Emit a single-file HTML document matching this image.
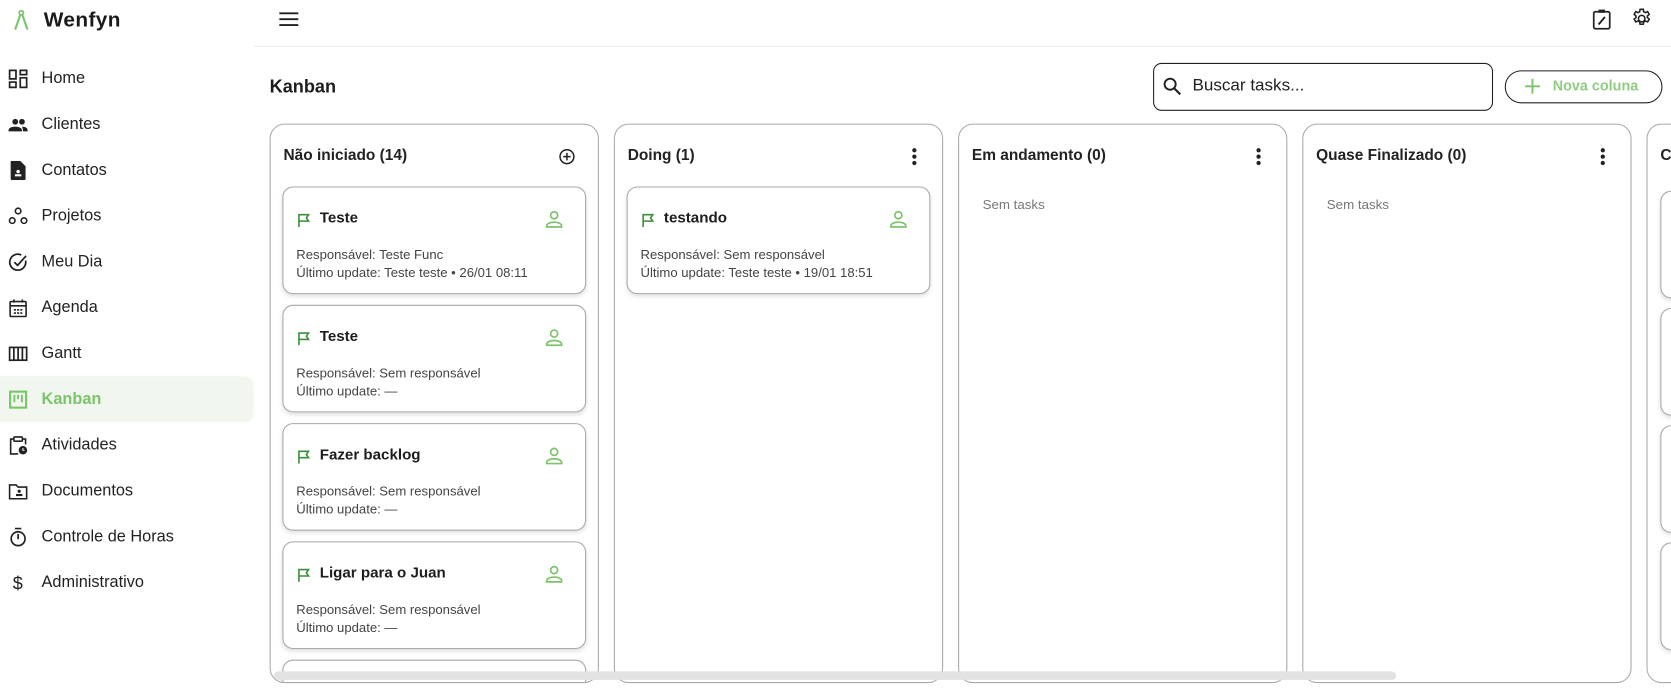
<!DOCTYPE html>
<html><head><meta charset="utf-8">
<style>
*{box-sizing:border-box;margin:0;padding:0}
html,body{width:1671px;height:693px;overflow:hidden;background:#fff}
#w{position:absolute;left:0;top:0;width:1568px;height:650px;transform:scale(1.06569);transform-origin:0 0;font-family:"Liberation Sans",sans-serif;color:#1d1d1d}
.abs{position:absolute}
.nav{position:absolute;left:0;width:238px;height:43px;display:flex;align-items:center;font-size:15.3px;color:#222}
.nav svg{position:absolute;left:8px;width:18px;height:18px}
.nav span{position:absolute;left:39px}
.nav.active{background:#f1f7ee;border-radius:0 8px 8px 0;color:#7cc46c;font-weight:bold}
.col{position:absolute;top:116px;height:525px;width:309px;border:1px solid #a9a9a9;border-radius:14px;background:#fff;overflow:hidden}
.col h3{position:absolute;left:12px;top:21px;font-size:14.5px;font-weight:bold;color:#222}
.dots{position:absolute;right:24px;top:22px;width:4px}
.dots i{display:block;width:4px;height:4px;background:#222;border-radius:50%;margin-bottom:2px}
.card{position:absolute;left:11px;width:285px;height:101px;border:1px solid #a9a9a9;border-radius:10px;background:#fff;box-shadow:0 2px 4px rgba(0,0,0,.12)}
.card .t{position:absolute;left:34px;top:21px;font-size:14.2px;font-weight:bold;color:#1d1d1d}
.card .flag{position:absolute;left:13px;top:24px}
.card .user{position:absolute;right:20px;top:21px}
.card .m{position:absolute;left:12px;top:55px;font-size:12.3px;color:#444;line-height:16.5px}
.empty{position:absolute;left:22px;top:68px;font-size:12.5px;color:#777}
</style></head><body><div id="w">

<svg class="abs" style="left:13px;top:9px" width="14" height="20" viewBox="0 0 14 20"><circle cx="7" cy="3" r="2" fill="none" stroke="#7cc46c" stroke-width="1.6"/><path d="M6 5 L1.5 18 M8 5 L12.5 18" stroke="#7cc46c" stroke-width="2" stroke-linecap="round"/></svg>
<div class="abs" style="left:41px;top:8px;font-size:19.5px;font-weight:bold;color:#1a1a1a;letter-spacing:.4px">Wenfyn</div>

<div class="abs" style="left:238px;top:43px;width:1433px;height:1px;background:#ececec"></div>
<svg class="abs" style="left:262px;top:11px" width="18" height="14" viewBox="0 0 18 14"><path d="M0 1.5H18M0 7H18M0 12.5H18" stroke="#222" stroke-width="1.8"/></svg>
<svg class="abs" style="left:1494px;top:8px" width="18" height="20" viewBox="0 0 18 20"><rect x="1.5" y="3" width="15" height="16" rx="1.5" fill="none" stroke="#222" stroke-width="1.6"/><rect x="6" y="1" width="6" height="3" fill="#222"/><path d="M6 15 L12 8" stroke="#222" stroke-width="1.8"/></svg>
<svg class="abs" style="left:1530px;top:7px" width="21" height="21" viewBox="0 0 24 24"><path fill="none" stroke="#222" stroke-width="1.7" d="M12 8.5a3.5 3.5 0 1 0 0 7a3.5 3.5 0 1 0 0-7zM10.3 2h3.4l.5 2.6 1.7.9 2.5-1 1.7 2.9-2 1.8v1.6l2 1.8-1.7 2.9-2.5-1-1.7 1-.5 2.5h-3.4l-.5-2.5-1.7-1-2.5 1-1.7-2.9 2-1.8v-1.6l-2-1.8 1.7-2.9 2.5 1 1.7-.9z"/></svg>

<div class="nav" style="top:52px"><svg viewBox="0 0 18 18"><path fill="none" stroke="#222" stroke-width="1.6" d="M1 1h6v8H1zM11 1h6v4h-6zM11 8h6v9h-6zM1 12h6v5H1z"/></svg><span>Home</span></div>
<div class="nav" style="top:95px"><svg viewBox="0 0 20 18"><circle cx="7" cy="6" r="3" fill="#222"/><circle cx="14" cy="6" r="3" fill="#222"/><path d="M0 15c0-3 4-4 7-4s7 1 7 4v1H0zM14 11c3 0 6 1 6 4v1h-5v-1c0-1.5-.5-3-1-4z" fill="#222"/></svg><span>Clientes</span></div>
<div class="nav" style="top:138px"><svg viewBox="0 0 18 18"><path d="M3 0h8l5 5v12a1 1 0 0 1-1 1H3a1 1 0 0 1-1-1V1a1 1 0 0 1 1-1z" fill="#222"/><circle cx="9" cy="10" r="1.6" fill="#fff"/><rect x="6" y="12.5" width="6" height="2" fill="#fff"/></svg><span>Contatos</span></div>
<div class="nav" style="top:181px"><svg viewBox="0 0 18 18"><g fill="none" stroke="#222" stroke-width="1.5"><circle cx="9" cy="4" r="2.6"/><circle cx="3.5" cy="13" r="2.6"/><circle cx="14.5" cy="13" r="2.6"/></g></svg><span>Projetos</span></div>
<div class="nav" style="top:224px"><svg viewBox="0 0 18 18"><path fill="none" stroke="#222" stroke-width="1.6" d="M16 7.5A7.5 7.5 0 1 1 12 2.3M5.5 9l3 3 8-9"/></svg><span>Meu Dia</span></div>
<div class="nav" style="top:267px"><svg viewBox="0 0 18 18"><rect x="1.5" y="3" width="15" height="14" rx="1" fill="none" stroke="#222" stroke-width="1.5"/><path d="M1.5 7h15M5 1v3M13 1v3" stroke="#222" stroke-width="1.5"/><g fill="#222"><rect x="5" y="10" width="2" height="1.5"/><rect x="8" y="10" width="2" height="1.5"/><rect x="11" y="10" width="2" height="1.5"/><rect x="5" y="13" width="2" height="1.5"/><rect x="8" y="13" width="2" height="1.5"/><rect x="11" y="13" width="2" height="1.5"/></g></svg><span>Agenda</span></div>
<div class="nav" style="top:310px"><svg viewBox="0 0 18 18"><rect x="1" y="3" width="16" height="12" fill="none" stroke="#222" stroke-width="1.6"/><path d="M5 3v12M9 3v12M13 3v12" stroke="#222" stroke-width="1.6"/></svg><span>Gantt</span></div>
<div class="nav active" style="top:353px"><svg viewBox="0 0 18 18"><rect x="1.5" y="1.5" width="15" height="15" fill="none" stroke="#7cc46c" stroke-width="2"/><path d="M5.5 4.5v7M9 4.5v4M12.5 4.5v7" stroke="#7cc46c" stroke-width="1.8"/></svg><span>Kanban</span></div>
<div class="nav" style="top:396px"><svg viewBox="0 0 18 18"><path fill="none" stroke="#222" stroke-width="1.5" d="M9 17H2V3h3M13 3h3v5"/><rect x="5" y="1" width="8" height="4" rx="1" fill="none" stroke="#222" stroke-width="1.5"/><circle cx="13.5" cy="13.5" r="4" fill="#222"/><path d="M13.5 11.5v2h1.5" stroke="#fff" stroke-width="1"/></svg><span>Atividades</span></div>
<div class="nav" style="top:439px"><svg viewBox="0 0 18 18"><path fill="none" stroke="#222" stroke-width="1.5" d="M1 3h6l2 2h8v11H1z"/><circle cx="10" cy="9" r="1.5" fill="#222"/><rect x="7" y="11.5" width="6" height="2" fill="#222"/></svg><span>Documentos</span></div>
<div class="nav" style="top:482px"><svg viewBox="0 0 18 18"><circle cx="9" cy="10.5" r="6.5" fill="none" stroke="#222" stroke-width="1.6"/><path d="M6 1h6M9 6v5" stroke="#222" stroke-width="1.6"/></svg><span>Controle de Horas</span></div>
<div class="nav" style="top:525px"><svg viewBox="0 0 18 18"><text x="4" y="15" font-size="17" font-family="Liberation Sans" fill="#222">$</text></svg><span>Administrativo</span></div>

<div class="abs" style="left:253px;top:72px;font-size:17px;font-weight:bold;color:#1d1d1d">Kanban</div>
<div class="abs" style="left:1082px;top:59px;width:319px;height:45px;border:1px solid #222;border-radius:8px"></div>
<svg class="abs" style="left:1091px;top:72px" width="18" height="18" viewBox="0 0 18 18"><circle cx="7" cy="7" r="5.2" fill="none" stroke="#222" stroke-width="1.8"/><path d="M11 11l5.5 5.5" stroke="#222" stroke-width="2"/></svg>
<div class="abs" style="left:1119px;top:72px;font-size:16px;color:#222">Buscar tasks...</div>
<div class="abs" style="left:1412px;top:66px;width:148px;height:31px;border:1px solid #222;border-radius:16px"></div>
<svg class="abs" style="left:1430px;top:73px" width="16" height="16" viewBox="0 0 16 16"><path d="M8 1v14M1 8h14" stroke="#7cc46c" stroke-width="1.8"/></svg>
<div class="abs" style="left:1457px;top:73px;font-size:13.5px;font-weight:bold;color:#8fcc80">Nova coluna</div>

<div class="col" style="left:253px">
  <h3>Não iniciado (14)</h3>
  <svg class="abs" style="left:270px;top:22px" width="16" height="16" viewBox="0 0 16 16"><circle cx="8" cy="8" r="6.5" fill="none" stroke="#222" stroke-width="1.4"/><path d="M8 4.5v7M4.5 8h7" stroke="#222" stroke-width="1.4"/></svg>
  <div class="card" style="top:58px"><svg class="flag" width="12" height="13" viewBox="0 0 12 13"><path d="M1.5 13V1.5h9l-2 3 2 3h-9" fill="none" stroke="#3a8f3a" stroke-width="1.5"/></svg><div class="t">Teste</div><svg class="user" width="18" height="18" viewBox="0 0 18 18"><circle cx="9" cy="5" r="3.3" fill="none" stroke="#7cc46c" stroke-width="1.6"/><path d="M2 16v-1c0-2 3-3.5 7-3.5s7 1.5 7 3.5v1z" fill="none" stroke="#7cc46c" stroke-width="1.6"/></svg><div class="m">Responsável: Teste Func<br>Último update: Teste teste • 26/01 08:11</div></div>
  <div class="card" style="top:169px"><svg class="flag" width="12" height="13" viewBox="0 0 12 13"><path d="M1.5 13V1.5h9l-2 3 2 3h-9" fill="none" stroke="#3a8f3a" stroke-width="1.5"/></svg><div class="t">Teste</div><svg class="user" width="18" height="18" viewBox="0 0 18 18"><circle cx="9" cy="5" r="3.3" fill="none" stroke="#7cc46c" stroke-width="1.6"/><path d="M2 16v-1c0-2 3-3.5 7-3.5s7 1.5 7 3.5v1z" fill="none" stroke="#7cc46c" stroke-width="1.6"/></svg><div class="m">Responsável: Sem responsável<br>Último update: —</div></div>
  <div class="card" style="top:280px"><svg class="flag" width="12" height="13" viewBox="0 0 12 13"><path d="M1.5 13V1.5h9l-2 3 2 3h-9" fill="none" stroke="#3a8f3a" stroke-width="1.5"/></svg><div class="t">Fazer backlog</div><svg class="user" width="18" height="18" viewBox="0 0 18 18"><circle cx="9" cy="5" r="3.3" fill="none" stroke="#7cc46c" stroke-width="1.6"/><path d="M2 16v-1c0-2 3-3.5 7-3.5s7 1.5 7 3.5v1z" fill="none" stroke="#7cc46c" stroke-width="1.6"/></svg><div class="m">Responsável: Sem responsável<br>Último update: —</div></div>
  <div class="card" style="top:391px"><svg class="flag" width="12" height="13" viewBox="0 0 12 13"><path d="M1.5 13V1.5h9l-2 3 2 3h-9" fill="none" stroke="#3a8f3a" stroke-width="1.5"/></svg><div class="t">Ligar para o Juan</div><svg class="user" width="18" height="18" viewBox="0 0 18 18"><circle cx="9" cy="5" r="3.3" fill="none" stroke="#7cc46c" stroke-width="1.6"/><path d="M2 16v-1c0-2 3-3.5 7-3.5s7 1.5 7 3.5v1z" fill="none" stroke="#7cc46c" stroke-width="1.6"/></svg><div class="m">Responsável: Sem responsável<br>Último update: —</div></div>
  <div class="card" style="top:502px"></div>
</div>
<div class="col" style="left:576px">
  <h3>Doing (1)</h3><div class="dots"><i></i><i></i><i></i></div>
  <div class="card" style="top:58px"><svg class="flag" width="12" height="13" viewBox="0 0 12 13"><path d="M1.5 13V1.5h9l-2 3 2 3h-9" fill="none" stroke="#3a8f3a" stroke-width="1.5"/></svg><div class="t">testando</div><svg class="user" width="18" height="18" viewBox="0 0 18 18"><circle cx="9" cy="5" r="3.3" fill="none" stroke="#7cc46c" stroke-width="1.6"/><path d="M2 16v-1c0-2 3-3.5 7-3.5s7 1.5 7 3.5v1z" fill="none" stroke="#7cc46c" stroke-width="1.6"/></svg><div class="m">Responsável: Sem responsável<br>Último update: Teste teste • 19/01 18:51</div></div>
</div>
<div class="col" style="left:899px"><h3>Em andamento (0)</h3><div class="dots"><i></i><i></i><i></i></div><div class="empty">Sem tasks</div></div>
<div class="col" style="left:1222px"><h3>Quase Finalizado (0)</h3><div class="dots"><i></i><i></i><i></i></div><div class="empty">Sem tasks</div></div>
<div class="col" style="left:1545px"><h3>C</h3>
  <div class="card" style="top:62px;left:12px"></div>
  <div class="card" style="top:172px;left:12px"></div>
  <div class="card" style="top:282px;left:12px"></div>
  <div class="card" style="top:392px;left:12px"></div>
</div>

<div class="abs" style="left:257px;top:630px;width:1053px;height:8px;background:#e2e2e2;border-radius:4px"></div>
</div></body></html>
